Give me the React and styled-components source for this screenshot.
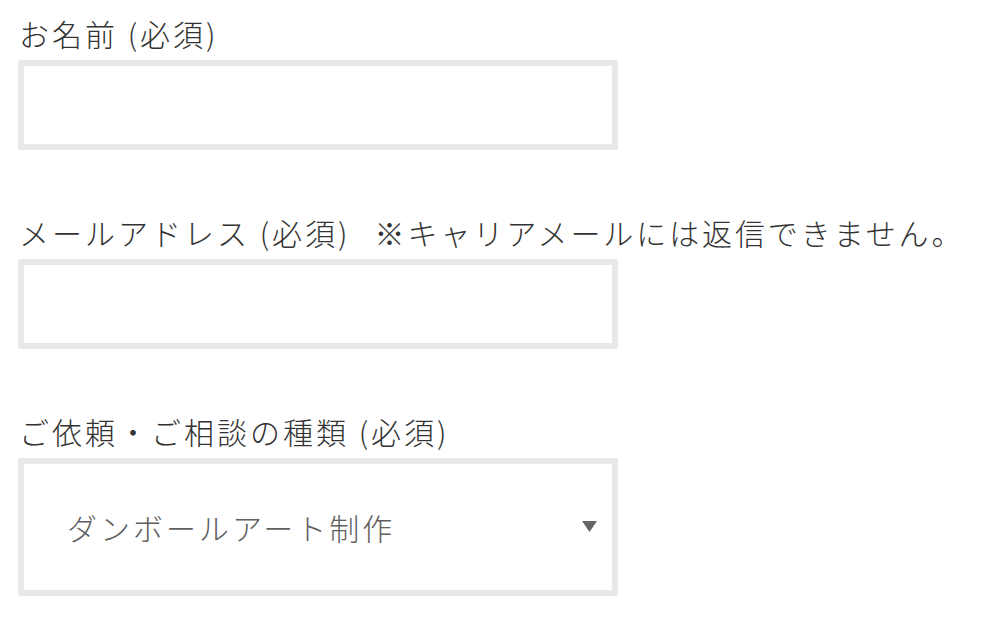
import React from "react";
import styled, { createGlobalStyle } from "styled-components";

const GlobalStyle = createGlobalStyle`
  html, body {
    margin: 0;
    padding: 0;
    background: #ffffff;
  }
  body {
    font-family: "Noto Sans CJK JP", "Noto Sans", sans-serif;
    color: #3c3c3c;
  }
`;

const Form = styled.form`
  display: flex;
  flex-direction: column;
  gap: 61px;
  padding: 12px 0 0 18px;
`;

const Field = styled.div`
  display: flex;
  flex-direction: column;
  gap: 6px;
`;

const Label = styled.label`
  font-size: 30px;
  font-weight: 300;
  line-height: 42px;
  letter-spacing: 3px;
  padding-left: 1px;
  white-space: nowrap;
  color: #333333;
`;

const Note = styled.span`
  margin-left: 24px;
  letter-spacing: 2.9px;
`;

const TextInput = styled.input`
  box-sizing: border-box;
  width: 600px;
  height: 90px;
  border: 6px solid #e8e8e8;
  border-radius: 2px;
  background: #fff;
  outline: none;
  padding: 0 16px;
  font-family: inherit;
  font-size: 28px;
`;

const SelectWrap = styled.div`
  position: relative;
  width: 600px;
`;

const Select = styled.select`
  box-sizing: border-box;
  width: 600px;
  height: 138px;
  border: 6px solid #e8e8e8;
  border-radius: 2px;
  background: #fff;
  appearance: none;
  -webkit-appearance: none;
  outline: none;
  padding: 0 0 0 43px;
  font-family: inherit;
  font-size: 30px;
  font-weight: 300;
  letter-spacing: 3px;
  color: #606060;
`;

const Arrow = styled.svg`
  position: absolute;
  right: 21px;
  top: 63px;
  width: 15px;
  height: 11px;
  pointer-events: none;
`;

export default function App() {
  return (
    <>
      <GlobalStyle />
      <Form onSubmit={(e) => e.preventDefault()}>
        <Field>
          <Label htmlFor="name">お名前 (必須)</Label>
          <TextInput id="name" type="text" />
        </Field>
        <Field>
          <Label htmlFor="email">
            メールアドレス (必須)
            <Note>※キャリアメールには返信できません。</Note>
          </Label>
          <TextInput id="email" type="email" />
        </Field>
        <Field>
          <Label htmlFor="kind">ご依頼・ご相談の種類 (必須)</Label>
          <SelectWrap>
            <Select id="kind" defaultValue="art">
              <option value="art">ダンボールアート制作</option>
              <option value="other">その他</option>
            </Select>
            <Arrow viewBox="0 0 15 11">
              <path d="M0 0 H15 L7.5 11 Z" fill="#666" />
            </Arrow>
          </SelectWrap>
        </Field>
      </Form>
    </>
  );
}
